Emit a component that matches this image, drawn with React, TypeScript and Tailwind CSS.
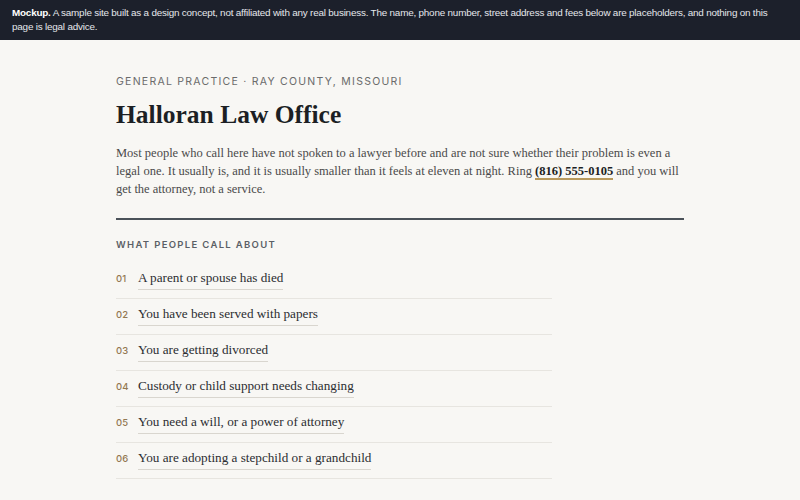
const items = [
  "A parent or spouse has died",
  "You have been served with papers",
  "You are getting divorced",
  "Custody or child support needs changing",
  "You need a will, or a power of attorney",
  "You are adopting a stepchild or a grandchild",
];

const sans = "font-['Inter','Liberation_Sans',sans-serif]";
const serif = "font-['Liberation_Serif','DejaVu_Serif',serif]";

export default function App() {
  return (
    <div className="min-h-[500px] bg-[#f8f7f4] text-[#1f2328]">
      <div className="bg-[#1c202b] px-3 py-[6px] font-['Liberation_Sans',sans-serif] text-[9.9px] leading-[14px] tracking-[-0.2px] text-[#e5e7eb]">
        <b className="font-bold text-white">Mockup.</b> A sample site built as a design concept, not affiliated
        with any real business. The name, phone number, street address and fees below are placeholders, and nothing on
        this page is legal advice.
      </div>

      <main className="mx-auto w-[568px] pt-[35px]">
        <p className={`text-[10.5px] leading-[14px] tracking-[0.12em] text-[#6b6b6b] ${sans}`}>
          GENERAL PRACTICE · RAY COUNTY, MISSOURI
        </p>
        <h1 className={`mt-[9px] text-[25.5px] font-bold leading-[34px] text-[#1c1f24] ${serif}`}>
          Halloran Law Office
        </h1>
        <p className={`mt-[12px] text-[12.5px] leading-[18px] text-[#4a4a4a] ${serif}`}>
          Most people who call here have not spoken to a lawyer before and are not sure whether their problem is even
          a legal one. It usually is, and it is usually smaller than it feels at eleven at night. Ring{" "}
          <a className="border-b-2 border-[#b89a5e] font-bold text-[#1c1f24]">(816) 555-0105</a> and you will get the
          attorney, not a service.
        </p>

        <div className="mt-[20px] h-[2px] bg-[#4b5259]" />

        <h2 className={`mt-[19px] text-[9.5px] leading-[12px] font-semibold tracking-[0.14em] text-[#5b5f66] ${sans}`}>
          WHAT PEOPLE CALL ABOUT
        </h2>

        <ul className="mt-[12px] w-[436px]">
          {items.map((t, i) => (
            <li key={t} className="flex items-baseline gap-[10px] border-b border-[#e7e5e0] pt-[6px] pb-[8px]">
              <span className={`w-[12px] text-[9.5px] font-medium text-[#937852] ${sans}`}>
                {String(i + 1).padStart(2, "0")}
              </span>
              <span className={`border-b border-[#d9d6cf] pb-[2px] text-[13.2px] leading-[18px] text-[#2b2d31] ${serif}`}>
                {t}
              </span>
            </li>
          ))}
        </ul>
      </main>
    </div>
  );
}
